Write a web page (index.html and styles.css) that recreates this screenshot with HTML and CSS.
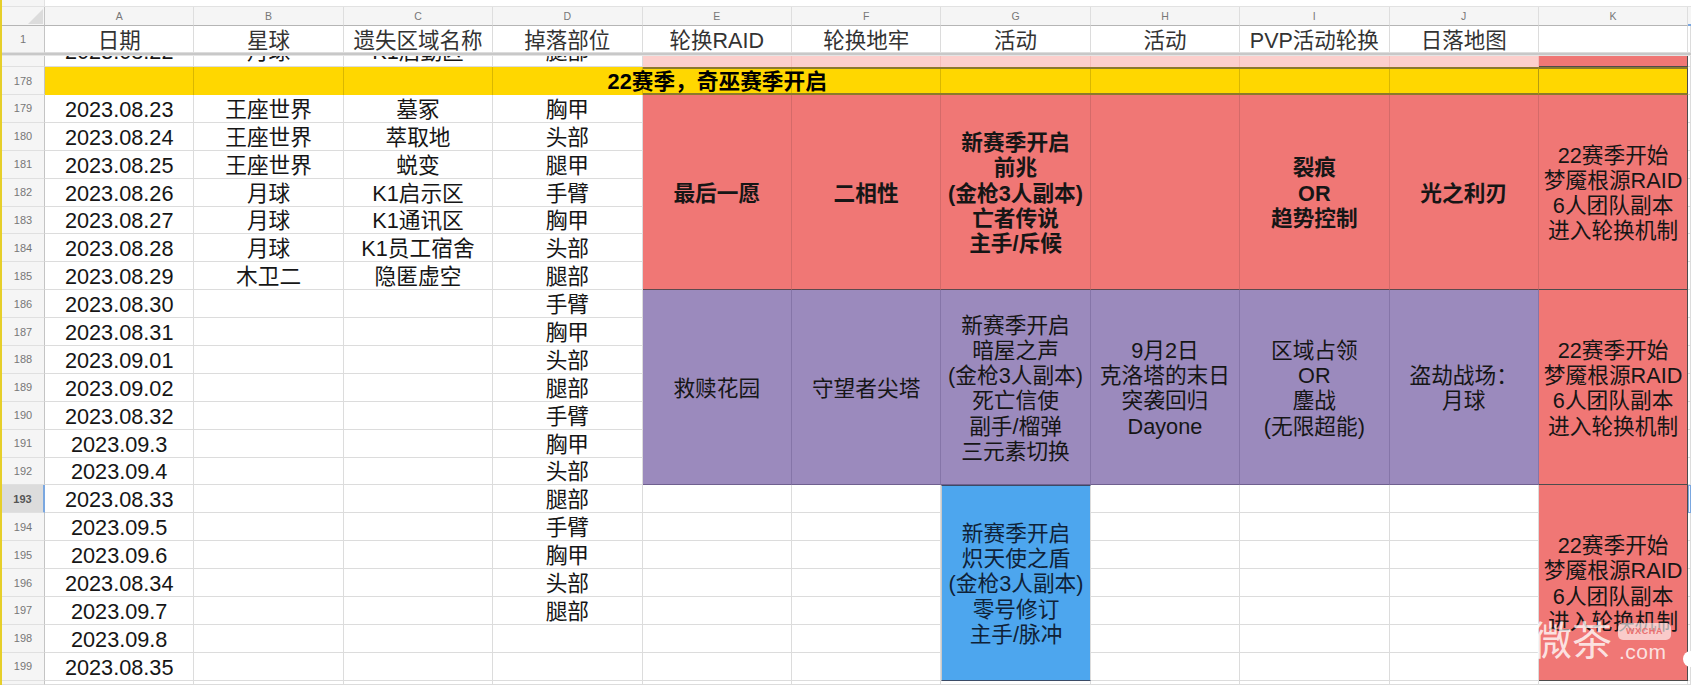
FILE: index.html
```html
<!DOCTYPE html>
<html lang="zh-CN">
<head>
<meta charset="utf-8">
<title>赛季轮换表</title>
<link rel="stylesheet" href="styles.css">
</head>
<body>
<div class="sheet">
  <div class="topband"><span class="topstub"></span></div>

  <div class="corner"><span class="tri"></span></div>
  <div class="ch">A</div><div class="ch">B</div><div class="ch">C</div><div class="ch">D</div><div class="ch">E</div><div class="ch">F</div><div class="ch">G</div><div class="ch">H</div><div class="ch">I</div><div class="ch">J</div><div class="ch">K</div><div class="ch ch-l"></div>

  <div class="rn">1</div>
  <div class="c hd">日期</div><div class="c hd">星球</div><div class="c hd">遗失区域名称</div><div class="c hd">掉落部位</div><div class="c hd">轮换RAID</div><div class="c hd">轮换地牢</div><div class="c hd">活动</div><div class="c hd">活动</div><div class="c hd">PVP活动轮换</div><div class="c hd">日落地图</div><div class="c hd"></div><div class="c hd"></div>

  <div class="freeze"></div>

  <div class="rn rn-clip">177</div>
  <div class="c clip">2023.08.22</div><div class="c clip">月球</div><div class="c clip">K1后勤区</div><div class="c clip">腿部</div>
  <div class="c pink"></div><div class="c pink"></div><div class="c pink"></div><div class="c pink"></div><div class="c pink"></div><div class="c pink"></div><div class="c red k"></div><div class="c"></div>

  <div class="rn">178</div>
  <div class="c banner">22赛季，奇巫赛季开启</div><div class="c banner-j"></div><div class="c banner-k"></div><div class="c"></div>

  <div class="rn">179</div>
  <div class="c">2023.08.23</div><div class="c">王座世界</div><div class="c">墓冢</div><div class="c">胸甲</div>
  <div class="c red m b">最后一愿</div>
  <div class="c red m b">二相性</div>
  <div class="c red m b">新赛季开启<br>前兆<br>(金枪3人副本)<br>亡者传说<br>主手/斥候</div>
  <div class="c red m b"></div>
  <div class="c red m b">裂痕<br>OR<br>趋势控制</div>
  <div class="c red m b">光之利刃</div>
  <div class="c red m k">22赛季开始<br>梦魇根源RAID<br>6人团队副本<br>进入轮换机制</div>
  <div class="c"></div>

  <div class="rn">180</div><div class="c">2023.08.24</div><div class="c">王座世界</div><div class="c">萃取地</div><div class="c">头部</div><div class="c"></div>
  <div class="rn">181</div><div class="c">2023.08.25</div><div class="c">王座世界</div><div class="c">蜕变</div><div class="c">腿甲</div><div class="c"></div>
  <div class="rn">182</div><div class="c">2023.08.26</div><div class="c">月球</div><div class="c">K1启示区</div><div class="c">手臂</div><div class="c"></div>
  <div class="rn">183</div><div class="c">2023.08.27</div><div class="c">月球</div><div class="c">K1通讯区</div><div class="c">胸甲</div><div class="c"></div>
  <div class="rn">184</div><div class="c">2023.08.28</div><div class="c">月球</div><div class="c">K1员工宿舍</div><div class="c">头部</div><div class="c"></div>
  <div class="rn">185</div><div class="c">2023.08.29</div><div class="c">木卫二</div><div class="c">隐匿虚空</div><div class="c">腿部</div><div class="c"></div>

  <div class="rn">186</div>
  <div class="c">2023.08.30</div><div class="c"></div><div class="c"></div><div class="c">手臂</div>
  <div class="c purple m">救赎花园</div>
  <div class="c purple m">守望者尖塔</div>
  <div class="c purple m">新赛季开启<br>暗屋之声<br>(金枪3人副本)<br>死亡信使<br>副手/榴弹<br>三元素切换</div>
  <div class="c purple m">9月2日<br>克洛塔的末日<br>突袭回归<br>Dayone</div>
  <div class="c purple m">区域占领<br>OR<br>鏖战<br>(无限超能)</div>
  <div class="c purple m">盗劫战场：<br>月球</div>
  <div class="c red m k">22赛季开始<br>梦魇根源RAID<br>6人团队副本<br>进入轮换机制</div>
  <div class="c"></div>

  <div class="rn">187</div><div class="c">2023.08.31</div><div class="c"></div><div class="c"></div><div class="c">胸甲</div><div class="c"></div>
  <div class="rn">188</div><div class="c">2023.09.01</div><div class="c"></div><div class="c"></div><div class="c">头部</div><div class="c"></div>
  <div class="rn">189</div><div class="c">2023.09.02</div><div class="c"></div><div class="c"></div><div class="c">腿部</div><div class="c"></div>
  <div class="rn">190</div><div class="c">2023.08.32</div><div class="c"></div><div class="c"></div><div class="c">手臂</div><div class="c"></div>
  <div class="rn">191</div><div class="c">2023.09.3</div><div class="c"></div><div class="c"></div><div class="c">胸甲</div><div class="c"></div>
  <div class="rn">192</div><div class="c">2023.09.4</div><div class="c"></div><div class="c"></div><div class="c">头部</div><div class="c"></div>

  <div class="rn rn-sel">193</div>
  <div class="c">2023.08.33</div><div class="c"></div><div class="c"></div><div class="c">腿部</div>
  <div class="c"></div><div class="c"></div>
  <div class="c blue m">新赛季开启<br>炽天使之盾<br>(金枪3人副本)<br>零号修订<br>主手/脉冲</div>
  <div class="c"></div><div class="c"></div><div class="c"></div>
  <div class="c red m k">22赛季开始<br>梦魇根源RAID<br>6人团队副本<br>进入轮换机制</div>
  <div class="c l-sel"></div>

  <div class="rn">194</div><div class="c">2023.09.5</div><div class="c"></div><div class="c"></div><div class="c">手臂</div><div class="c"></div><div class="c"></div><div class="c"></div><div class="c"></div><div class="c"></div><div class="c"></div>
  <div class="rn">195</div><div class="c">2023.09.6</div><div class="c"></div><div class="c"></div><div class="c">胸甲</div><div class="c"></div><div class="c"></div><div class="c"></div><div class="c"></div><div class="c"></div><div class="c"></div>
  <div class="rn">196</div><div class="c">2023.08.34</div><div class="c"></div><div class="c"></div><div class="c">头部</div><div class="c"></div><div class="c"></div><div class="c"></div><div class="c"></div><div class="c"></div><div class="c"></div>
  <div class="rn">197</div><div class="c">2023.09.7</div><div class="c"></div><div class="c"></div><div class="c">腿部</div><div class="c"></div><div class="c"></div><div class="c"></div><div class="c"></div><div class="c"></div><div class="c"></div>
  <div class="rn">198</div><div class="c">2023.09.8</div><div class="c"></div><div class="c"></div><div class="c"></div><div class="c"></div><div class="c"></div><div class="c"></div><div class="c"></div><div class="c"></div><div class="c"></div>
  <div class="rn">199</div><div class="c">2023.08.35</div><div class="c"></div><div class="c"></div><div class="c"></div><div class="c"></div><div class="c"></div><div class="c"></div><div class="c"></div><div class="c"></div><div class="c"></div>

  <div class="rn"></div><div class="c"></div><div class="c"></div><div class="c"></div><div class="c"></div><div class="c"></div><div class="c"></div><div class="c"></div><div class="c"></div><div class="c"></div><div class="c"></div><div class="c"></div><div class="c"></div>
</div>

<div class="watermark">
  <span class="wm-cn">微茶</span>
  <span class="wm-bubble">WXCHA</span>
  <span class="wm-com">.com</span>
</div>
<span class="wm-dot"></span>
</body>
</html>
```

FILE: styles.css
```css
* { box-sizing: border-box; }

html, body {
  margin: 0;
  height: 100%;
  overflow: hidden;
  background: #fff;
}

body {
  border-left: 2px solid #e6cf2a;
  font-family: "Liberation Sans", "Noto Sans CJK SC", sans-serif;
  color: #161616;
}

.sheet {
  display: grid;
  grid-template-columns: 43px repeat(11, 149.4px) 1fr;
  grid-template-rows: 7px 19px 27px 3px 11px 28px repeat(21, 27.9px) 1fr;
  height: 685px;
}

.topband {
  grid-column: 1 / -1;
  border-bottom: 1px solid #e2e2e2;
  display: flex;
}

.topstub {
  width: 43px;
  background: #f5f5f5;
  border-right: 1px solid #e2e2e2;
}

.corner {
  background: #f5f5f5;
  border-right: 1px solid #c4c4c4;
  border-bottom: 1px solid #b5b5b5;
  display: flex;
  justify-content: flex-end;
  align-items: flex-end;
  padding: 0 1px 1px 0;
}

.tri {
  width: 15px;
  height: 15px;
  background: #dcdcdc;
  clip-path: polygon(100% 0, 100% 100%, 0 100%);
}

.ch {
  background: #f5f5f5;
  border-right: 1px solid #dedede;
  border-bottom: 1px solid #b5b5b5;
  font-size: 10.5px;
  color: #777;
  display: flex;
  align-items: center;
  justify-content: center;
}

.ch-l {
  border-bottom: 2px solid #7aa7e0;
  border-right: 0;
}

.rn {
  background: #f5f5f5;
  border-right: 1px solid #c4c4c4;
  border-bottom: 1px solid #e0e0e0;
  font-size: 11px;
  color: #777;
  display: flex;
  align-items: center;
  justify-content: center;
  overflow: hidden;
}

.rn-clip {
  align-items: flex-end;
  padding-bottom: 8px;
}

.rn-sel {
  background: #dcdcdc;
  color: #555;
  font-weight: bold;
  border-right: 2px solid #7aa7e0;
}

.c {
  border-right: 1px solid #dcdcdc;
  border-bottom: 1px solid #dcdcdc;
  padding-top: 2px;
  font-size: 21.7px;
  line-height: 25.2px;
  text-align: center;
  white-space: nowrap;
  display: flex;
  align-items: center;
  justify-content: center;
  overflow: hidden;
  min-width: 0;
}

.hd {
  padding-top: 5px;
  font-size: 21.5px;
  color: #333;
}

.freeze {
  grid-column: 1 / -1;
  background: #c8c8c8;
  border-bottom: 1px solid #e4e4e4;
}

.clip {
  align-items: flex-end;
  padding: 0 0 2px;
}

.pink {
  background: #fccfcc;
  border-right-color: #f3bdba;
  border-bottom: 0;
}

.red {
  background: #f07775;
  border-right-color: #d46a69;
  border-bottom-color: #5c4a4f;
}

.purple {
  background: #9b8abd;
  border-right-color: #8575a8;
  border-bottom-color: #6f608f;
}

.blue {
  background: #4da6ee;
  border-bottom-color: #3a4a66;
  border-top: 1px solid #3a4a66;
  border-left: 1px solid #c9c9c9;
  color: #0f2238;
}

.m { grid-row: span 7; }

.b { font-weight: bold; }

.k {
  border-right: 1px solid #4c4c4c;
  border-bottom-color: #4c4c4c;
}

.banner {
  grid-column: span 9;
  font-weight: bold;
  color: #000;
  border: 0;
  background:
    linear-gradient(#8c7a2c, #8c7a2c) 597.6px 0 / 100% 2px no-repeat,
    linear-gradient(#8c7a2c, #8c7a2c) 597.6px 100% / 100% 2px no-repeat,
    repeating-linear-gradient(to right, transparent 0 148.4px, rgba(120, 100, 0, 0.28) 148.4px 149.4px),
    #ffd700;
}

.banner-j,
.banner-k {
  background: #ffd700;
  border-top: 2px solid #8c7a2c;
  border-bottom: 2px solid #8c7a2c;
}

.banner-j {
  border-right: 1px solid #b69c10;
}

.banner-k {
  border-right: 1px solid #4c4c4c;
}

.l-sel {
  border: 1px solid #7aa7e0;
  background: #f3f7fd;
}

.watermark {
  position: absolute;
  left: 1532px;
  top: 617px;
  width: 142px;
  height: 48px;
  color: rgba(255, 255, 255, 0.8);
}

.wm-cn {
  position: absolute;
  left: 0;
  top: 0;
  font-size: 40px;
  line-height: 48px;
}

.wm-bubble {
  position: absolute;
  left: 86px;
  top: 6px;
  width: 53px;
  height: 17px;
  border-radius: 5px;
  background: rgba(255, 255, 255, 0.62);
  color: #e9706e;
  font-size: 9px;
  font-weight: bold;
  letter-spacing: 0.6px;
  line-height: 17px;
  text-align: center;
}

.wm-com {
  position: absolute;
  left: 87px;
  top: 23px;
  font-size: 21px;
  line-height: 24px;
  letter-spacing: 0.5px;
}

.wm-dot {
  position: absolute;
  left: 1683px;
  top: 651px;
  width: 16px;
  height: 16px;
  border-radius: 50%;
  background: #fff;
}
```
